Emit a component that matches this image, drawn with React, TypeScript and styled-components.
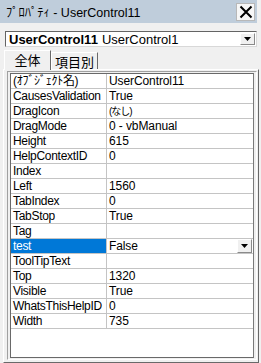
import React from "react";
import styled, { createGlobalStyle } from "styled-components";

const GlobalStyle = createGlobalStyle`
  html, body { margin: 0; padding: 0; background: #f0f0f0; }
  body {
    font-family: "Liberation Sans", "Noto Sans CJK JP", sans-serif;
    font-size: 12px;
    color: #000;
  }
  * { box-sizing: border-box; }
`;

const Window = styled.div`
  width: 261px;
  height: 363px;
  display: flex;
  flex-direction: column;
  background: #f0f0f0;
  overflow: hidden;
`;

const TitleBar = styled.div`
  height: 23px;
  margin-right: 4px;
  background: #bfcddb;
  display: flex;
  align-items: center;
  justify-content: space-between;
  padding-left: 6px;
`;

const TitleText = styled.span`
  font-size: 12.5px;
  white-space: nowrap;
`;

const CloseButton = styled.div`
  width: 19px;
  height: 18px;
  margin-right: 2px;
  margin-top: 1px;
  background: #f7f7f7;
  border: 1px solid #b8b8b8;
  display: flex;
  align-items: center;
  justify-content: center;
`;

const Combo = styled.div`
  margin: 8px 4px 0 5px;
  height: 16px;
  background: #fff;
  border-style: solid;
  border-width: 1px;
  border-color: #646464 #d8d8d8 #d8d8d8 #646464;
  display: flex;
  align-items: center;
  justify-content: space-between;
  padding-left: 3px;
`;

const ComboText = styled.span`
  font-size: 13px;
  white-space: nowrap;
`;

const Bold = styled.b`
  font-weight: bold;
  margin-right: 4px;
`;

const DropButton = styled.div`
  width: 15px;
  height: 12px;
  margin-right: 1px;
  background: #f0f0f0;
  border-style: solid;
  border-width: 1px;
  border-color: #ffffff #8a8a8a #8a8a8a #ffffff;
  display: flex;
  align-items: center;
  justify-content: center;
`;

const TabStrip = styled.div`
  margin-top: 2px;
  height: 20px;
  display: flex;
  align-items: flex-end;
  padding-left: 4px;
  font-family: "Noto Sans CJK JP", sans-serif;
`;

const Tab = styled.div<{ $active?: boolean }>`
  width: 47px;
  height: ${(p) => (p.$active ? 20 : 17)}px;
  border-style: solid;
  border-width: 1px 1px 0 1px;
  border-color: #ffffff #696969 transparent #ffffff;
  background: #f0f0f0;
  display: flex;
  align-items: center;
  justify-content: center;
  font-size: 13px;
  line-height: 1;
  padding-bottom: ${(p) => (p.$active ? 2 : 0)}px;
  position: relative;
  z-index: ${(p) => (p.$active ? 1 : 0)};
  margin-bottom: ${(p) => (p.$active ? -1 : 0)}px;
`;

const TabPanel = styled.div`
  height: 294px;
  margin: 0 2px 0 3px;
  border-style: solid;
  border-width: 1px;
  border-color: #ffffff #696969 #696969 #ffffff;
  padding: 1px 1px 2px 3px;
`;

const Grid = styled.div`
  height: 100%;
  border-style: solid;
  border-width: 1px;
  border-color: #a0a0a0 #ffffff #ffffff #a0a0a0;
  padding: 1px 2px;
  background: #f0f0f0;
`;

const GridBody = styled.div`
  height: 100%;
  background: #fff;
  border: 1px solid #696969;
  border-right-color: #7a7a7a;
`;

const Row = styled.div`
  display: grid;
  grid-template-columns: 96px 1fr;
  height: 15px;
  border-bottom: 1px solid #c4c4c4;
`;

const NameCell = styled.div<{ $selected?: boolean }>`
  border-right: 1px solid #c4c4c4;
  padding-left: 2px;
  line-height: 15px;
  white-space: nowrap;
  overflow: hidden;
  letter-spacing: -0.3px;
  background: ${(p) => (p.$selected ? "#0078d7" : "transparent")};
  color: ${(p) => (p.$selected ? "#fff" : "#000")};
`;

const ValueCell = styled.div`
  padding-left: 2px;
  line-height: 15px;
  white-space: nowrap;
  overflow: hidden;
  letter-spacing: -0.1px;
  display: flex;
  align-items: center;
  justify-content: space-between;
`;

const Kana = styled.span`
  font-size: 10px;
  letter-spacing: -1px;
`;

const CellButton = styled.div`
  width: 15px;
  height: 14px;
  margin-right: 1px;
  background: #f0f0f0;
  border-style: solid;
  border-width: 1px;
  border-color: #ffffff #8a8a8a #8a8a8a #ffffff;
  display: flex;
  align-items: center;
  justify-content: center;
`;

const Arrow = () => (
  <svg width="7" height="4" viewBox="0 0 7 4">
    <path d="M0 0 H7 L3.5 4 Z" fill="#000" />
  </svg>
);

type Prop = { name: React.ReactNode; value: React.ReactNode; selected?: boolean; dropdown?: boolean };

const props: Prop[] = [
  { name: "(ｵﾌﾞｼﾞｪｸﾄ名)", value: "UserControl11" },
  { name: "CausesValidation", value: "True" },
  { name: "DragIcon", value: <Kana>(なし)</Kana> },
  { name: "DragMode", value: "0 - vbManual" },
  { name: "Height", value: "615" },
  { name: "HelpContextID", value: "0" },
  { name: "Index", value: "" },
  { name: "Left", value: "1560" },
  { name: "TabIndex", value: "0" },
  { name: "TabStop", value: "True" },
  { name: "Tag", value: "" },
  { name: "test", value: "False", selected: true, dropdown: true },
  { name: "ToolTipText", value: "" },
  { name: "Top", value: "1320" },
  { name: "Visible", value: "True" },
  { name: "WhatsThisHelpID", value: "0" },
  { name: "Width", value: "735" },
];

export default function App() {
  return (
    <>
      <GlobalStyle />
      <Window>
        <TitleBar>
          <TitleText>ﾌﾟﾛﾊﾟﾃｨ - UserControl11</TitleText>
          <CloseButton>
            <svg width="14" height="14" viewBox="0 0 14 14">
              <path d="M1.5 1.5 L12.5 12.5 M12.5 1.5 L1.5 12.5" stroke="#000" strokeWidth="2" />
            </svg>
          </CloseButton>
        </TitleBar>
        <Combo>
          <ComboText>
            <Bold>UserControl11</Bold>UserControl1
          </ComboText>
          <DropButton>
            <Arrow />
          </DropButton>
        </Combo>
        <TabStrip>
          <Tab $active>全体</Tab>
          <Tab>項目別</Tab>
        </TabStrip>
        <TabPanel>
          <Grid>
            <GridBody>
              {props.map((p, i) => (
                <Row key={i}>
                  <NameCell $selected={p.selected}>{p.name}</NameCell>
                  <ValueCell>
                    <span>{p.value}</span>
                    {p.dropdown && (
                      <CellButton>
                        <Arrow />
                      </CellButton>
                    )}
                  </ValueCell>
                </Row>
              ))}
            </GridBody>
          </Grid>
        </TabPanel>
      </Window>
    </>
  );
}
